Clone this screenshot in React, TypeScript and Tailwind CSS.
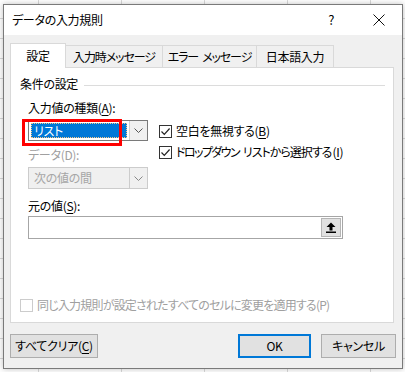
import React from 'react';

const font = "font-['Noto_Sans_CJK_JP','Noto_Sans',sans-serif] [font-feature-settings:'palt']";

const Check = ({ checked, disabled }: { checked?: boolean; disabled?: boolean }) => (
  <span
    className={`w-[13px] h-[13px] shrink-0 flex items-center justify-center border bg-white ${
      disabled ? 'border-[#cccccc]' : 'border-[#333333]'
    }`}
  >
    {checked && (
      <svg width="11" height="11" viewBox="0 0 11 11">
        <path d="M1.5 5.5 L4.3 8.3 L9.6 2.5" fill="none" stroke="#222" strokeWidth="1.2" />
      </svg>
    )}
  </span>
);

const Chevron = ({ color = '#555' }: { color?: string }) => (
  <svg width="9" height="5" viewBox="0 0 9 5">
    <path d="M0.5 0.5 L4.5 4.5 L8.5 0.5" fill="none" stroke={color} strokeWidth="1" />
  </svg>
);

const U = ({ children }: { children: React.ReactNode }) => <span className="underline underline-offset-2">{children}</span>;

export default function App() {
  return (
    <div
      className={`w-[405px] h-[372px] overflow-hidden bg-white bg-[linear-gradient(to_right,#d9d9d9_1px,transparent_1px),linear-gradient(to_bottom,#d9d9d9_1px,transparent_1px)] bg-[size:83px_20px] bg-[position:38px_18px] pt-[4px] pl-[3px] text-[12px] leading-[16px] tracking-[-0.3px] text-black ${font}`}
    >
      <div className="w-[400px] h-[365px] border border-[#7a7a7a] bg-[#f0f0f0] flex flex-col shadow-[0_0_6px_rgba(0,0,0,0.25)]">
        {/* Title bar */}
        <div className="h-[30px] bg-white flex items-center pl-[8px] shrink-0">
          <span className="text-[12px]">データの入力規則</span>
          <span className="ml-auto mr-[39px] text-[13px] font-normal">?</span>
          <svg width="12" height="12" viewBox="0 0 12 12" className="mr-[17px]">
            <path d="M0.5 0.5 L11.5 11.5 M11.5 0.5 L0.5 11.5" stroke="#111" strokeWidth="1" />
          </svg>
        </div>

        <div className="px-[6px] flex flex-col">
          {/* Tabs */}
          <div className="flex items-end h-[32px] pt-[8px] relative z-10">
            <div className="w-[56px] h-[25px] -mb-[1px] bg-white border border-b-0 border-[#d9d9d9] flex items-center justify-center">
              設定
            </div>
            <div className="w-[97px] h-[22px] border border-l-0 border-b-0 border-[#d9d9d9] flex items-center justify-center tracking-[-1.1px]">
              入力時メッセージ
            </div>
            <div className="w-[94px] h-[22px] border border-l-0 border-b-0 border-[#d9d9d9] flex items-center justify-center">
              <span className="tracking-[-1.1px]">エラー</span>
              <span className="ml-[4px] tracking-[-1.1px]">メッセージ</span>
            </div>
            <div className="w-[77px] h-[22px] border border-l-0 border-b-0 border-[#d9d9d9] flex items-center justify-center">
              日本語入力
            </div>
          </div>

          {/* Panel */}
          <div className="w-[384px] h-[256px] bg-white border border-[#d9d9d9] flex flex-col relative">
            <div className="flex items-center mt-[8px] pl-[9px] pr-[8px]">
              <span>条件の設定</span>
              <div className="flex-1 h-px bg-[#dcdcdc] ml-[6px] mt-[2px]" />
            </div>

            <div className="pl-[17px] flex flex-col">
              <div className="mt-[8px]">
                入力値の種類(<U>A</U>):
              </div>
              <div className="flex mt-[4px]">
                <div className="w-[120px] flex flex-col">
                  <div className="h-[21px] border border-[#7a7a7a] bg-white flex">
                    <div className="flex-1 m-[2px] bg-[#0078d7] border border-dotted border-[#f5c98a] text-white flex items-center pl-[2px] leading-none">
                      リスト
                    </div>
                    <div className="w-[18px] bg-[#f0f0f0] border-l border-[#cfcfcf] flex items-center justify-center">
                      <Chevron />
                    </div>
                  </div>
                  <div className="mt-[6px] text-[#a0a0a0]">データ(D):</div>
                  <div className="mt-[4px] h-[22px] border border-[#cccccc] bg-[#f0f0f0] flex">
                    <div className="flex-1 flex items-center pl-[5px] text-[#a6a6a6]">次の値の間</div>
                    <div className="w-[18px] border-l border-[#cccccc] flex items-center justify-center">
                      <Chevron color="#888" />
                    </div>
                  </div>
                </div>
                <div className="ml-[11px] flex flex-col mt-[3px] gap-[5px]">
                  <div className="flex items-center gap-[4px] h-[16px]">
                    <Check checked />
                    <span>
                      空白を無視する(<U>B</U>)
                    </span>
                  </div>
                  <div className="flex items-center gap-[4px] h-[16px]">
                    <Check checked />
                    <span className="flex">
                      <span className="tracking-[-1.6px]">ドロップダウン</span>
                      <span className="ml-[4px] tracking-[-1px]">リストから選択する</span>
                      <span className="ml-[1px]">
                        (<U>I</U>)
                      </span>
                    </span>
                  </div>
                </div>
              </div>

              <div className="mt-[9px]">
                元の値(<U>S</U>):
              </div>
              <div className="mt-[2px] w-[315px] h-[23px] border border-[#a6a6a6] bg-white flex justify-end p-px">
                <div className="w-[20px] bg-[#e1e1e1] border border-[#b5b5b5] flex items-center justify-center">
                  <svg width="10" height="11" viewBox="0 0 10 11">
                    <path d="M5 0.5 L9.5 5 L6.5 5 L6.5 8.5 L3.5 8.5 L3.5 5 L0.5 5 Z" fill="#000" />
                    <rect x="0" y="9.5" width="10" height="1.5" fill="#000" />
                  </svg>
                </div>
              </div>
            </div>

            <div className="mt-auto mb-[9px] pl-[9px] flex items-center gap-[4px] h-[16px] text-[#a0a0a0]">
              <Check disabled />
              <span className="tracking-[-0.8px]">同じ入力規則が設定されたすべてのセルに変更を適用する(P)</span>
            </div>

            {/* annotation */}
            <div className="absolute left-[11px] top-[51px] w-[100px] h-[27px] border-[3px] border-[#ff0000]" />
          </div>

          {/* Buttons */}
          <div className="flex mt-[11px]">
            <button className="w-[88px] h-[24px] bg-[#e1e1e1] border border-[#adadad] flex items-center justify-center">
              すべてクリア(<U>C</U>)
            </button>
            <button className="ml-auto w-[73px] h-[24px] bg-[#e1e1e1] border-2 border-[#0078d7] flex items-center justify-center">
              OK
            </button>
            <button className="ml-[10px] w-[75px] h-[24px] bg-[#e1e1e1] border border-[#adadad] flex items-center justify-center">
              キャンセル
            </button>
          </div>
        </div>
      </div>
    </div>
  );
}
